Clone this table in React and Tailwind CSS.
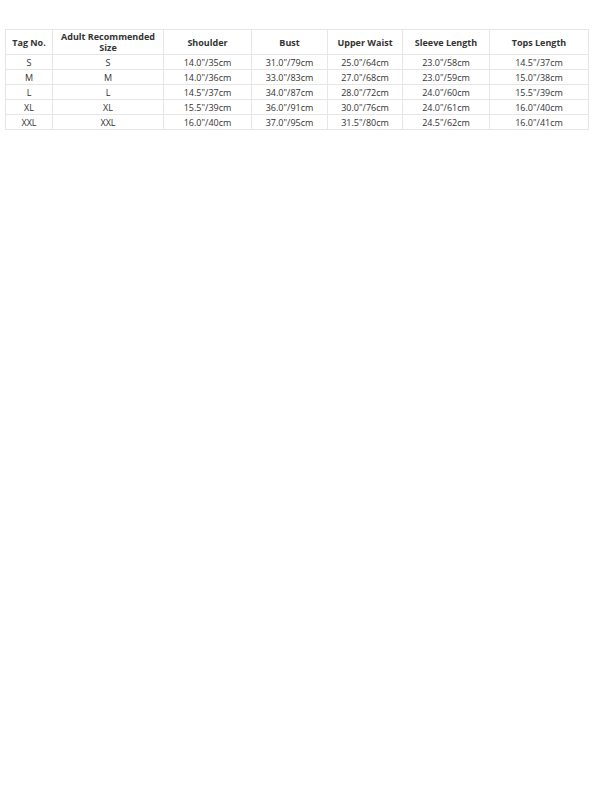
const headers = ['Tag No.', 'Adult Recommended Size', 'Shoulder', 'Bust', 'Upper Waist', 'Sleeve Length', 'Tops Length']

const rows = [
  ['S', 'S', '14.0"/35cm', '31.0"/79cm', '25.0"/64cm', '23.0"/58cm', '14.5"/37cm'],
  ['M', 'M', '14.0"/36cm', '33.0"/83cm', '27.0"/68cm', '23.0"/59cm', '15.0"/38cm'],
  ['L', 'L', '14.5"/37cm', '34.0"/87cm', '28.0"/72cm', '24.0"/60cm', '15.5"/39cm'],
  ['XL', 'XL', '15.5"/39cm', '36.0"/91cm', '30.0"/76cm', '24.0"/61cm', '16.0"/40cm'],
  ['XXL', 'XXL', '16.0"/40cm', '37.0"/95cm', '31.5"/80cm', '24.5"/62cm', '16.0"/41cm'],
]

const widths = ['w-[47px]', 'w-[111px]', 'w-[88px]', 'w-[76px]', 'w-[75px]', 'w-[87px]', 'w-[99px]']

export default function App() {
  return (
    <div className="min-h-screen bg-white pt-[29px] pl-[5px]" style={{ fontFamily: '"Open Sans", sans-serif' }}>
      <table className="table-fixed border-collapse text-[9px] text-[#333] w-[584px]">
        <colgroup>
          {widths.map((w, i) => <col key={i} className={w} />)}
        </colgroup>
        <thead>
          <tr className="h-[25px]">
            {headers.map((h) => (
              <th key={h} className="border border-[#e6e6e6] font-bold text-center leading-[11px] px-1">
                {h}
              </th>
            ))}
          </tr>
        </thead>
        <tbody>
          {rows.map((r) => (
            <tr key={r[0]} className="h-[15px]">
              {r.map((c, i) => (
                <td key={i} className="border border-[#e6e6e6] text-center leading-[13px] font-normal">
                  {c}
                </td>
              ))}
            </tr>
          ))}
        </tbody>
      </table>
    </div>
  )
}
